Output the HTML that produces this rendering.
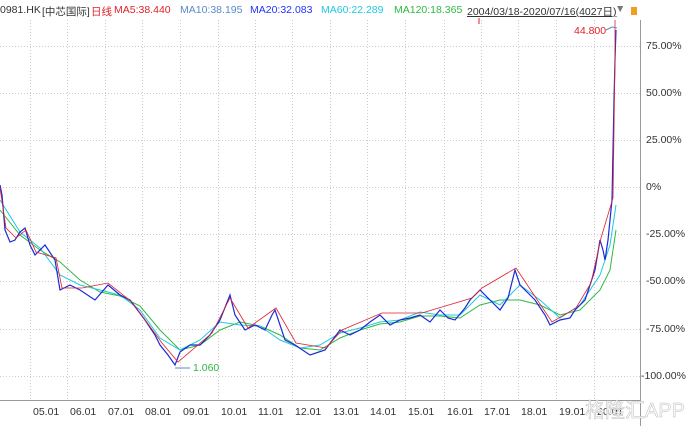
<!DOCTYPE html><html><head><style>
body{margin:0;width:693px;height:426px;background:#fff;font-family:"Liberation Sans","Noto Sans CJK SC",sans-serif;overflow:hidden;position:relative}
.t{position:absolute;font-size:10.5px;white-space:nowrap;top:4px}
.y{position:absolute;left:646px;font-size:10.5px;color:#333}
.x{position:absolute;top:406px;font-size:10.5px;color:#333}
</style></head><body>
<div class="t" style="left:0;color:#333">0981.HK</div>
<div class="t" style="left:42px;color:#333">[中芯国际]</div>
<div class="t" style="left:91px;color:#e0202a">日线</div>
<div class="t" style="left:114px;color:#e0202a">MA5:38.440</div>
<div class="t" style="left:180px;color:#5a8ac8">MA10:38.195</div>
<div class="t" style="left:250px;color:#2233ff">MA20:32.083</div>
<div class="t" style="left:321px;color:#22c8e0">MA60:22.289</div>
<div class="t" style="left:394px;color:#30b840">MA120:18.365</div>
<div class="t" style="left:467px;color:#333;text-decoration:underline">2004/03/18-2020/07/16(4027日)</div>
<div class="t" style="left:615px;top:3px;color:#777">▼</div>
<div style="position:absolute;left:631px;top:7px;width:6px;height:8px;background:#f0a020"></div>
<div class="t" style="left:574px;top:25px;color:#e0202a">44.800</div>
<svg width="693" height="426" style="position:absolute;left:0;top:0">
<g stroke="#ccc" stroke-dasharray="1,2" stroke-width="1">
<line x1="0" y1="46.5" x2="640" y2="46.5"/><line x1="0" y1="93.5" x2="640" y2="93.5"/><line x1="0" y1="140.5" x2="640" y2="140.5"/><line x1="0" y1="187.5" x2="640" y2="187.5"/><line x1="0" y1="234.5" x2="640" y2="234.5"/><line x1="0" y1="281.5" x2="640" y2="281.5"/><line x1="0" y1="329.5" x2="640" y2="329.5"/><line x1="0" y1="376.5" x2="640" y2="376.5"/>
<line x1="30.5" y1="20" x2="30.5" y2="400"/><line x1="67.5" y1="20" x2="67.5" y2="400"/><line x1="105.5" y1="20" x2="105.5" y2="400"/><line x1="142.5" y1="20" x2="142.5" y2="400"/><line x1="180.5" y1="20" x2="180.5" y2="400"/><line x1="218.5" y1="20" x2="218.5" y2="400"/><line x1="255.5" y1="20" x2="255.5" y2="400"/><line x1="292.5" y1="20" x2="292.5" y2="400"/><line x1="330.5" y1="20" x2="330.5" y2="400"/><line x1="367.5" y1="20" x2="367.5" y2="400"/><line x1="405.5" y1="20" x2="405.5" y2="400"/><line x1="444.5" y1="20" x2="444.5" y2="400"/><line x1="481.5" y1="20" x2="481.5" y2="400"/><line x1="518.5" y1="20" x2="518.5" y2="400"/><line x1="556.5" y1="20" x2="556.5" y2="400"/><line x1="594.5" y1="20" x2="594.5" y2="400"/>
</g>
<line x1="640.5" y1="20" x2="640.5" y2="426" stroke="#999"/>
<line x1="0" y1="400.5" x2="640" y2="400.5" stroke="#999"/>
<polyline fill="none" stroke="#30b840" stroke-width="1" points="0,210 20,235 40,250 60,262 80,280 100,292 120,296 140,306 160,330 180,350 200,345 220,330 240,322 260,326 280,335 300,348 320,350 340,338 360,330 380,324 400,322 420,316 440,316 460,318 480,305 500,300 520,300 540,305 560,315 580,310 600,290 610,270 616,230"/>
<polyline fill="none" stroke="#22c8e0" stroke-width="1" points="0,200 20,232 40,248 60,275 80,285 100,290 120,295 140,310 160,338 180,350 200,340 220,322 240,325 260,326 280,340 300,348 320,345 340,333 360,328 380,322 400,320 420,312 440,315 460,315 480,295 500,305 520,285 540,300 560,318 580,305 600,275 610,245 616,205"/>
<polyline fill="none" stroke="#1a2ad8" stroke-width="1.2" points="0,185 2,195 5,230 10,242 15,240 20,232 25,228 30,245 35,255 45,245 55,260 60,290 70,285 80,290 95,300 108,285 120,295 130,300 145,320 155,335 160,345 168,355 175,365 180,352 190,345 200,345 210,335 220,320 228,300 230,295 235,315 245,330 255,325 265,330 272,315 275,310 285,340 295,345 310,355 325,350 340,330 350,335 360,330 370,322 380,315 390,325 400,320 410,318 420,315 430,322 440,310 448,318 455,320 465,308 470,300 480,290 490,300 500,310 508,298 515,270 520,285 525,290 535,300 545,315 550,325 560,320 570,318 575,310 585,300 590,285 595,270 600,240 603,250 605,260 608,240 612,200 614,100 615,60 616,30"/>
<polyline fill="none" stroke="#e0202a" stroke-width="0.8" points="0,188 6,228 16,238 26,230 36,252 56,258 62,288 82,288 108,283 132,302 162,343 178,362 212,333 230,298 248,328 276,308 296,343 326,348 342,330 382,313 422,313 472,298 482,288 516,268 536,298 552,322 576,308 591,283 601,238 613,198 615,60 615,20"/>
<line x1="479" y1="18" x2="479" y2="24" stroke="#e0202a"/>
<polyline fill="none" stroke="#5a8ac8" points="606,30 612,27 617,28"/>
<polyline fill="none" stroke="#5a8ac8" points="175,368 190,368"/>
</svg>
<div class="t" style="left:193px;top:362px;color:#30b840;font-size:10.5px">1.060</div>
<div class="y" style="top:40px">75.00%</div><div class="y" style="top:87px">50.00%</div><div class="y" style="top:134px">25.00%</div><div class="y" style="top:181px">0%</div><div class="y" style="top:228px">-25.00%</div><div class="y" style="top:275px">-50.00%</div><div class="y" style="top:323px">-75.00%</div><div class="y" style="top:370px;left:641px">-100.00%</div>
<div class="x" style="left:33px">05.01</div><div class="x" style="left:70px">06.01</div><div class="x" style="left:108px">07.01</div><div class="x" style="left:145px">08.01</div><div class="x" style="left:183px">09.01</div><div class="x" style="left:221px">10.01</div><div class="x" style="left:258px">11.01</div><div class="x" style="left:295px">12.01</div><div class="x" style="left:333px">13.01</div><div class="x" style="left:370px">14.01</div><div class="x" style="left:408px">15.01</div><div class="x" style="left:447px">16.01</div><div class="x" style="left:484px">17.01</div><div class="x" style="left:521px">18.01</div><div class="x" style="left:559px">19.01</div><div class="x" style="left:597px">20.01</div>
<div class="t" style="left:585px;top:394px;font-size:20px;color:#fff;-webkit-text-stroke:0.5px #bbb">格隆汇APP</div>
</body></html>
